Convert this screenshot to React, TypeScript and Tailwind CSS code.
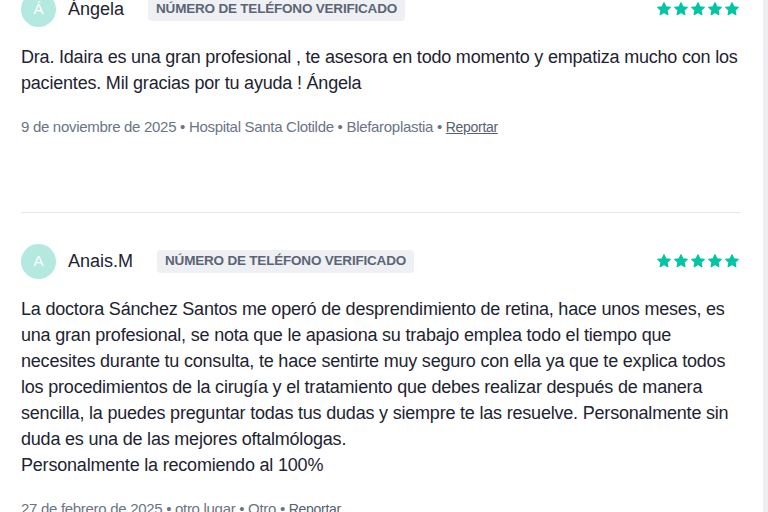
const Star = () => (
  <svg width="16" height="16" viewBox="0 0 24 24" className="text-[#00c5a4]">
    <path
      d="M12 2.5l2.9 6.1 6.6.8-4.9 4.6 1.3 6.6L12 17.3l-5.9 3.3 1.3-6.6-4.9-4.6 6.6-.8z"
      fill="currentColor"
      stroke="currentColor"
      strokeWidth="1.6"
      strokeLinejoin="round"
    />
  </svg>
)

type Review = {
  initial: string
  name: string
  text: string[]
  date: string
  place: string
  treatment: string
}

const reviews: Review[] = [
  {
    initial: 'Á',
    name: 'Ángela',
    text: [
      'Dra. Idaira es una gran profesional , te asesora en todo momento y empatiza mucho con los pacientes. Mil gracias por tu ayuda ! Ángela',
    ],
    date: '9 de noviembre de 2025',
    place: 'Hospital Santa Clotilde',
    treatment: 'Blefaroplastia',
  },
  {
    initial: 'A',
    name: 'Anais.M',
    text: [
      'La doctora Sánchez Santos me operó de desprendimiento de retina, hace unos meses, es una gran profesional, se nota que le apasiona su trabajo emplea todo el tiempo que necesites durante tu consulta, te hace sentirte muy seguro con ella ya que te explica todos los procedimientos de la cirugía y el tratamiento que debes realizar después de manera sencilla, la puedes preguntar todas tus dudas y siempre te las resuelve. Personalmente sin duda es una de las mejores oftalmólogas.',
      'Personalmente la recomiendo al 100%',
    ],
    date: '27 de febrero de 2025',
    place: 'otro lugar',
    treatment: 'Otro',
  },
]

const ReviewItem = ({ review, last }: { review: Review; last?: boolean }) => {
  return (
    <div className={last ? 'pt-[31px]' : 'pb-[75px] border-b border-[#e6e8eb]'}>
      <div className="flex items-center h-[34px]">
        <div className="w-[35px] h-[35px] rounded-full bg-[#b3e9df] flex items-center justify-center text-white text-[15px]">
          {review.initial}
        </div>
        <span className="ml-[12px] text-[18px] text-[#1d2430]">{review.name}</span>
        <span className="ml-[24px] px-[8px] h-[23px] flex items-center rounded bg-[#eef0f3] text-[#5b6576] text-[13.5px] font-bold tracking-[-0.2px]">
          NÚMERO DE TELÉFONO VERIFICADO
        </span>
        <div className="ml-auto flex gap-[1px]">
          <Star />
          <Star />
          <Star />
          <Star />
          <Star />
        </div>
      </div>
      <div className="mt-[18px] text-[18px] leading-[26px] tracking-[-0.2px] text-[#1d2430]">
        {review.text.map((t, i) => (
          <p key={i}>{t}</p>
        ))}
      </div>
      <div className="mt-[21px] text-[15px] leading-[20px] tracking-[-0.3px] text-[#6b7484]">
        {review.date} • {review.place} • {review.treatment} •{' '}
        <span className="underline text-[14px] text-[#566070]">Reportar</span>
      </div>
    </div>
  )
}

const App = () => {
  return (
    <div className="h-[512px] overflow-hidden bg-[#eceef1] font-['Liberation_Sans',Arial,sans-serif]">
      <div className="w-[763px] h-full bg-white px-[21px] pr-[23px] flex flex-col">
        <div className="-mt-[8px]">
          <ReviewItem review={reviews[0]} />
          <ReviewItem review={reviews[1]} last />
        </div>
      </div>
    </div>
  )
}

export default App
